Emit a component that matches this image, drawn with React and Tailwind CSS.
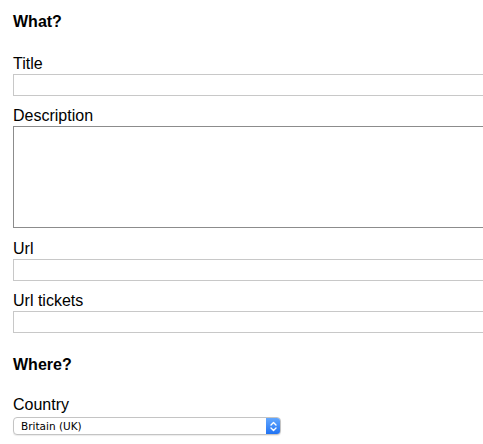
export default function App() {
  const label = "block text-[16px] leading-[18px] text-black";
  const input = "block h-[22px] w-[490px] border border-[#c8c8c8] bg-white";

  return (
    <div
      className="h-[444px] w-[483px] overflow-hidden bg-white pl-[13px] pt-[13px] text-black"
      style={{ fontFamily: '"Liberation Sans", Arial, sans-serif' }}
    >
      <h2 className="text-[16px] font-bold leading-[18px]">What?</h2>

      <label className={`${label} mt-[24px]`}>Title</label>
      <input type="text" className={`${input} mt-[1px]`} />

      <label className={`${label} mt-[11px]`}>Description</label>
      <textarea className="mt-[1px] block h-[102px] w-[490px] resize-none border border-[#8c8c8c] bg-white" />

      <label className={`${label} mt-[12px]`}>Url</label>
      <input type="text" className={`${input} mt-[1px]`} />

      <label className={`${label} mt-[11px]`}>Url tickets</label>
      <input type="text" className={`${input} mt-[1px]`} />

      <h2 className="mt-[23px] text-[16px] font-bold leading-[18px]">Where?</h2>

      <label className={`${label} mt-[22px]`}>Country</label>
      <div className="mt-[3px] flex h-[18px] w-[268px] items-stretch overflow-hidden rounded-[4px] border border-[#c4c4c4] bg-white shadow-[0_1px_1px_rgba(0,0,0,0.08)]">
        <span
          className="flex flex-1 items-center pl-[7px] text-[10.5px] leading-none text-black"
          style={{ fontFamily: '"DejaVu Sans", sans-serif' }}
        >
          Britain (UK)
        </span>
        <span className="-my-px -mr-px flex w-[15px] items-center justify-center rounded-r-[4px] bg-gradient-to-b from-[#66aaff] to-[#1a6ff2]">
          <svg width="7" height="11" viewBox="0 0 7 11" fill="none" stroke="white" strokeWidth="1.4" strokeLinecap="round" strokeLinejoin="round">
            <path d="M1 4 L3.5 1.5 L6 4" />
            <path d="M1 7 L3.5 9.5 L6 7" />
          </svg>
        </span>
      </div>
    </div>
  );
}
